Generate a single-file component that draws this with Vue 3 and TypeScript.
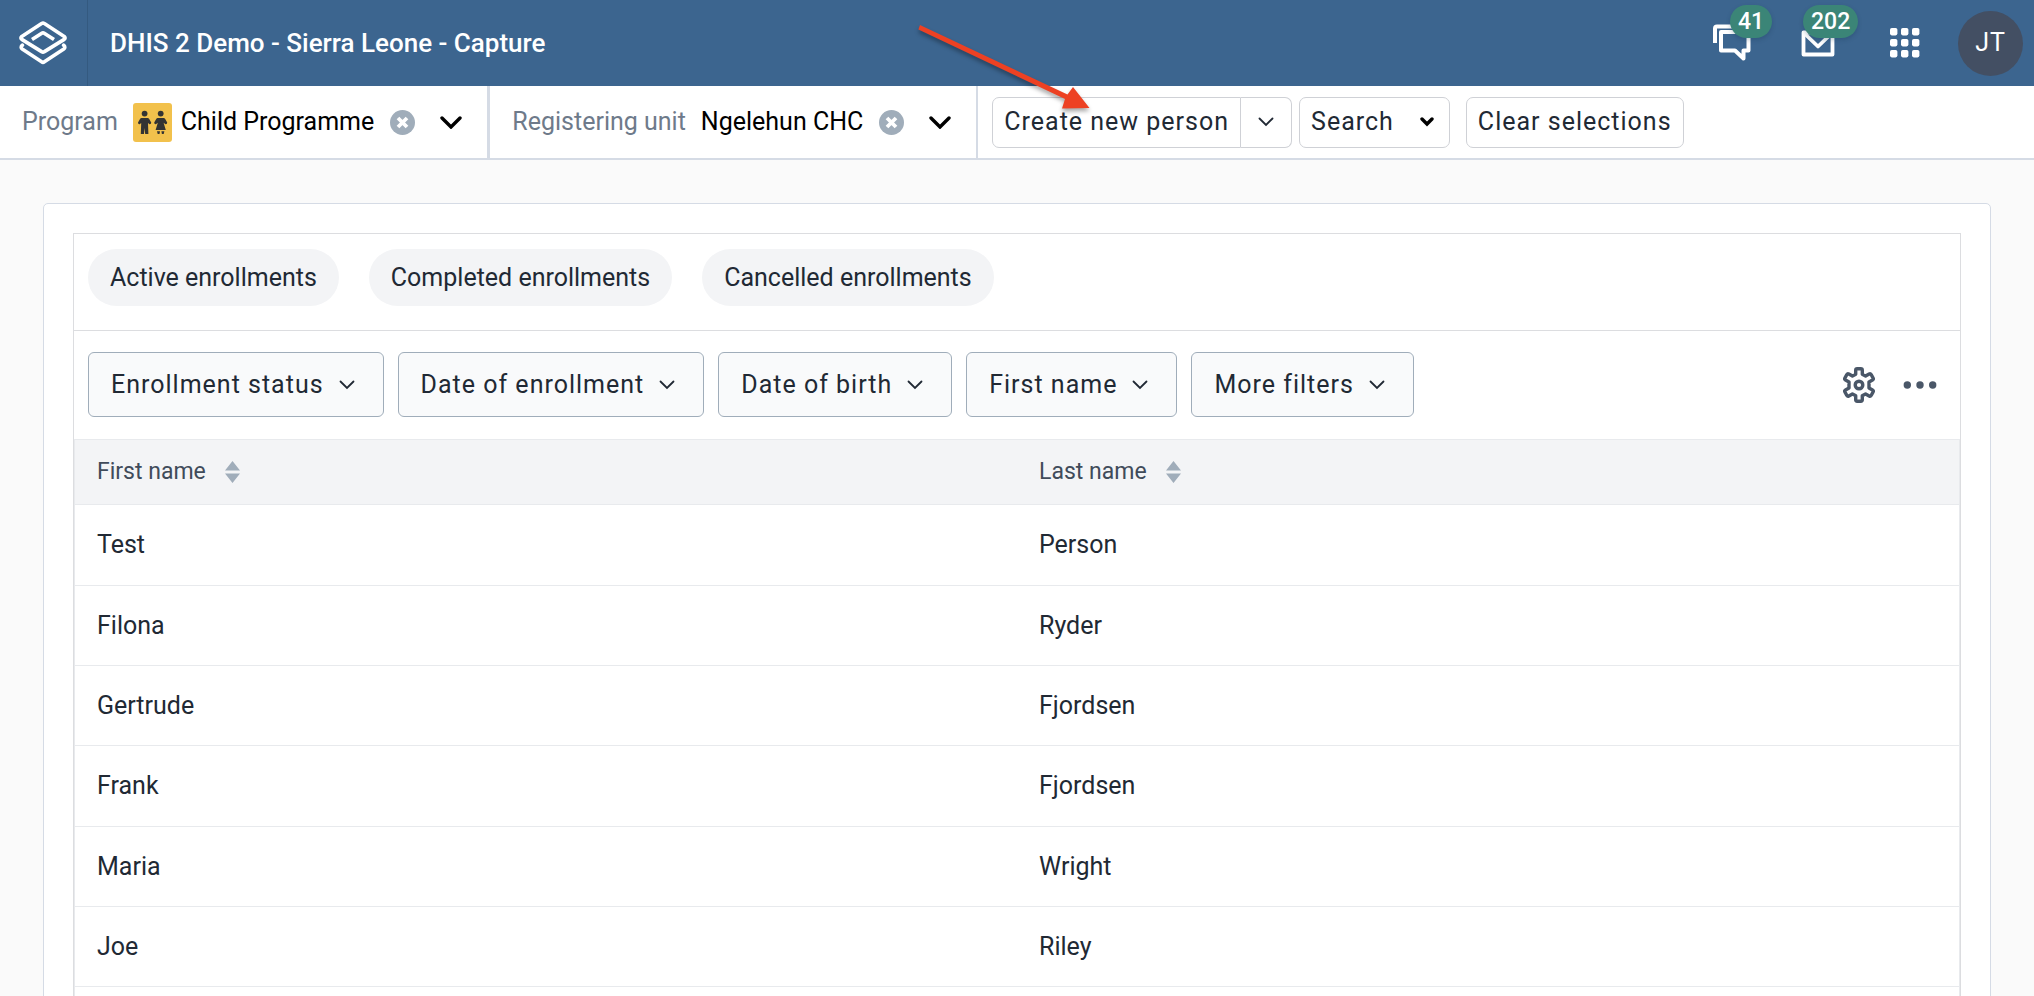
<script setup lang="ts">
interface Person {
  first: string
  last: string
}

const views: string[] = ['Active enrollments', 'Completed enrollments', 'Cancelled enrollments']
const filters: string[] = ['Enrollment status', 'Date of enrollment', 'Date of birth', 'First name', 'More filters']
const columns: string[] = ['First name', 'Last name']
const people: Person[] = [
  { first: 'Test', last: 'Person' },
  { first: 'Filona', last: 'Ryder' },
  { first: 'Gertrude', last: 'Fjordsen' },
  { first: 'Frank', last: 'Fjordsen' },
  { first: 'Maria', last: 'Wright' },
  { first: 'Joe', last: 'Riley' },
]
const dots: number[] = [0, 11, 22]
</script>

<template>
  <div class="page">
    <header class="topbar">
      <a class="logo" href="#" aria-label="Home">
        <svg width="48" height="44" viewBox="0 0 48 44" fill="none" stroke="#fff" stroke-width="3.6" stroke-linejoin="round" stroke-linecap="round">
          <path d="M22.6 2.6Q24 1.6 25.4 2.6L45.2 15.4Q47 17 45.2 18.4L25.4 30.6Q24 31.6 22.6 30.6L2.8 18.4Q1 17 2.8 15.4Z" />
          <path d="M13 18.6L22.8 12.2Q24 11.4 25.2 12.2L35 18.6" stroke-linecap="butt" />
          <path d="M3.4 24.2Q1 26.4 3.2 28L22.6 40.8Q24 41.8 25.4 40.8L44.8 28Q47 26.4 44.6 24.2" />
        </svg>
      </a>
      <h1 class="title">DHIS 2 Demo - Sierra Leone - Capture</h1>
      <nav class="tools">
        <a class="tool" href="#" aria-label="Interpretations">
          <svg width="38" height="38" viewBox="0 0 38 38" fill="none" stroke="#fff" stroke-width="4" stroke-linejoin="round">
            <path d="M2 19V4.500Q2 2.500 4 2.500H29" />
            <path d="M8 8H35.500V26.500H30.500V34.500L22 26.500H8Z" />
          </svg>
          <span class="badge">41</span>
        </a>
        <a class="tool" href="#" aria-label="Messages">
          <svg width="34" height="38" viewBox="0 0 34 38" fill="none" stroke="#fff" stroke-width="3.8" stroke-linejoin="round">
            <path d="M2.500 8.500H31.500V30.500H2.500Z" />
            <path d="M2.500 8.500L17 22.500L31.500 8.500" />
          </svg>
          <span class="badge">202</span>
        </a>
        <button class="tool" type="button" aria-label="Apps">
          <svg width="30" height="30" viewBox="0 0 30 30" fill="#fff">
            <template v-for="y in dots" :key="y">
              <rect v-for="x in dots" :key="x" :x="x" :y="y" width="7.4" height="7.4" rx="1.8" />
            </template>
          </svg>
        </button>
        <button class="avatar" type="button">JT</button>
      </nav>
    </header>

    <div class="selectors">
      <div class="selector program">
        <span class="label">Program</span>
        <svg class="program-icon" width="39" height="39" viewBox="0 0 39 39">
          <rect width="39" height="39" rx="3" fill="#f2c14c" />
          <g fill="#333">
            <circle cx="11.600" cy="10.600" r="2.900" />
            <path d="M8.500 15H14.700Q15.600 15 16.200 16L18.200 19.500Q18.300 21.500 16.500 21.300L15 20L15.400 31H12.200L11.600 25L11 31H7.800L8.200 20L6.700 21.300Q4.900 21.500 5 19.500L7 16Q7.600 15 8.500 15Z" />
            <circle cx="27.700" cy="10.600" r="2.900" />
            <path d="M24.700 15H30.700Q31.600 15 32.200 16L34.200 19.500Q34.300 21.500 32.500 21.300L30.600 19.800L32.800 27H22.600L24.800 19.800L22.900 21.300Q21.100 21.500 21.200 19.500L23.200 16Q23.800 15 24.700 15Z" />
            <path d="M24 28.300H27L26.500 31H24.700ZM28.400 28.300H31.400L30.700 31H28.900Z" />
          </g>
        </svg>
        <span class="value">Child Programme</span>
        <button class="clear" type="button" aria-label="Clear program">
          <svg width="25" height="25" viewBox="0 0 25 25">
            <circle cx="12.500" cy="12.500" r="12.500" fill="#a0adba" />
            <path d="M8 8L17 17M17 8L8 17" stroke="#fff" stroke-width="3.8" />
          </svg>
        </button>
        <button class="open" type="button" aria-label="Change program">
          <svg width="22" height="13" viewBox="0 0 22 13" fill="none" stroke="#000" stroke-width="3.4" stroke-linecap="round"><path d="M2 2L11 11L20 2" /></svg>
        </button>
      </div>
      <div class="selector unit">
        <span class="label">Registering unit</span>
        <span class="value">Ngelehun CHC</span>
        <button class="clear" type="button" aria-label="Clear registering unit">
          <svg width="25" height="25" viewBox="0 0 25 25">
            <circle cx="12.500" cy="12.500" r="12.500" fill="#a0adba" />
            <path d="M8 8L17 17M17 8L8 17" stroke="#fff" stroke-width="3.8" />
          </svg>
        </button>
        <button class="open" type="button" aria-label="Change registering unit">
          <svg width="22" height="13" viewBox="0 0 22 13" fill="none" stroke="#000" stroke-width="3.400" stroke-linecap="round"><path d="M2 2L11 11L20 2" /></svg>
        </button>
      </div>
      <div class="actions">
        <div class="split">
          <button class="action main" type="button">Create new person</button>
          <button class="action more" type="button" aria-label="More create options">
            <svg width="16" height="10" viewBox="0 0 16 10" fill="none" stroke="#212934" stroke-width="1.800" stroke-linecap="round"><path d="M1.500 1.500L8 8L14.500 1.500" /></svg>
          </button>
          <svg class="pointer" width="190" height="100" viewBox="0 0 190 100" aria-hidden="true">
            <path d="M7 5L5.400 9.500L152 79L149 88.500L176.500 88L160 67L154.500 74.500Z" fill="#ed4123" />
          </svg>
        </div>
        <button class="action search" type="button">
          Search
          <svg width="14" height="10" viewBox="0 0 14 10" fill="none" stroke="#000" stroke-width="3.400" stroke-linecap="round"><path d="M2 2L7 7L12 2" /></svg>
        </button>
        <button class="action reset" type="button">Clear selections</button>
      </div>
    </div>

    <main class="card">
      <section class="list">
        <div class="views">
          <button v-for="view in views" :key="view" class="chip" type="button">{{ view }}</button>
        </div>
        <div class="filters">
          <button v-for="filter in filters" :key="filter" class="filter" type="button">
            {{ filter }}
            <svg width="16" height="10" viewBox="0 0 16 10" fill="none" stroke="#212934" stroke-width="1.800" stroke-linecap="round"><path d="M1.500 1.500L8 8L14.500 1.500" /></svg>
          </button>
          <div class="list-tools">
            <button type="button" aria-label="Select columns">
              <svg width="36" height="36" viewBox="0 0 36 36" fill="none" stroke="#4a5768" stroke-width="3.400" stroke-linejoin="round">
                <path d="M14.700 3.200Q14.700 1.800 16.200 1.800H19.800Q21.300 1.800 21.300 3.200V7.200L24.600 9.100L28.100 7.100Q29.400 6.400 30.200 7.700L32 10.800Q32.800 12.200 31.500 13L28 15V21L31.500 23Q32.800 23.800 32 25.200L30.200 28.300Q29.400 29.600 28.100 28.900L24.600 26.900L21.300 28.800V32.800Q21.300 34.200 19.800 34.200H16.200Q14.700 34.200 14.700 32.800V28.800L11.400 26.900L7.900 28.900Q6.600 29.600 5.800 28.300L4 25.200Q3.200 23.800 4.500 23L8 21V15L4.500 13Q3.200 12.200 4 10.800L5.800 7.700Q6.600 6.400 7.900 7.100L11.400 9.100L14.700 7.200Z" />
                <circle cx="18" cy="18" r="3.800" />
              </svg>
            </button>
            <button type="button" aria-label="More options">
              <svg width="34" height="8" viewBox="0 0 34 8" fill="#4a5768"><circle cx="4.300" cy="4" r="3.700" /><circle cx="17" cy="4" r="3.700" /><circle cx="29.700" cy="4" r="3.700" /></svg>
            </button>
          </div>
        </div>
        <div class="table-frame">
          <table class="people">
            <thead>
              <tr>
                <th v-for="column in columns" :key="column" scope="col">
                  <div class="heading">
                    {{ column }}
                    <button type="button" :aria-label="`Sort by ${column}`">
                      <svg width="15" height="22" viewBox="0 0 15 22" fill="#a0adba"><path d="M7.500 0L15 9.500H0ZM7.500 22L0 12.500H15Z" /></svg>
                    </button>
                  </div>
                </th>
              </tr>
            </thead>
            <tbody>
              <tr v-for="person in people" :key="person.first">
                <td>{{ person.first }}</td>
                <td>{{ person.last }}</td>
              </tr>
            </tbody>
          </table>
        </div>
      </section>
    </main>
  </div>
</template>

<style>
html,
body {
  margin: 0;
  background: #fafafa;
}
</style>

<style scoped>
.page {
  height: 100vh;
  overflow: hidden;
  font-family: Roboto, "Liberation Sans", sans-serif;
  font-size: 25px;
  line-height: 32px;
  color: #212934;
}
.page * {
  box-sizing: border-box;
}
button {
  margin: 0;
  padding: 0;
  border: 0;
  background: none;
  color: inherit;
  font: inherit;
}
svg {
  display: block;
  flex: none;
}
.topbar {
  display: flex;
  align-items: center;
  height: 86px;
  background: #3c658f;
  color: #fff;
}
.logo {
  display: flex;
  align-items: center;
  align-self: stretch;
  padding: 0 20px 0 19px;
  border-right: 1px solid #345a80;
}
.title {
  margin: 0 0 0 22px;
  font-size: 26px;
  font-weight: 500;
}
.tools {
  display: flex;
  align-items: center;
  margin-left: auto;
  padding-right: 11px;
}
.tool {
  position: relative;
  display: flex;
}
.tool:nth-child(1) {
  margin-right: 50px;
}
.tool:nth-child(2) {
  margin-right: 55px;
}
.tool:nth-child(3) {
  margin-right: 38px;
}
.badge {
  position: absolute;
  left: 17px;
  top: -19px;
  padding: 0 8px;
  border-radius: 17px;
  background: #3b8577;
  box-shadow: 0 2px 4px rgba(20, 50, 80, 0.25);
  color: #fff;
  font-size: 23px;
  font-weight: 500;
  line-height: 33px;
}
.tool:nth-child(2) .badge {
  left: 2px;
}
.avatar {
  width: 65px;
  height: 65px;
  border-radius: 50%;
  background: #434f63;
  letter-spacing: 1px;
}
.selectors {
  display: flex;
  height: 74px;
  border-bottom: 2px solid #d5dbe5;
  background: #fff;
}
.selector {
  display: flex;
  align-items: center;
  padding-left: 22px;
  color: #000;
}
.program {
  padding-right: 25px;
  border-right: 3px solid #d5dbe5;
}
.unit {
  padding-right: 25px;
  border-right: 2px solid #d5dbe5;
}
.label {
  margin-right: 15px;
  color: #6e7a8a;
}
.program-icon {
  margin-right: 9px;
}
.clear {
  margin: 0 25px 0 16px;
}
.actions {
  display: flex;
  align-items: center;
  padding-left: 14px;
}
.split {
  position: relative;
  display: flex;
  margin-right: 7px;
}
.pointer {
  position: absolute;
  left: -79px;
  top: -77px;
  filter: drop-shadow(0 3px 2px rgba(0, 0, 0, 0.35));
  pointer-events: none;
}
.action {
  display: flex;
  align-items: center;
  height: 51px;
  padding: 0 11px;
  border: 1px solid #cfd1d6;
  border-radius: 7px;
  letter-spacing: 1px;
}
.main {
  border-radius: 7px 0 0 7px;
}
.more {
  padding: 0 17px;
  border-left: 0;
  border-radius: 0 7px 7px 0;
}
.search {
  gap: 26px;
  padding-right: 15px;
  margin-right: 16px;
}
.card {
  margin: 43px;
  padding: 29px;
  border: 1px solid #d5dbe5;
  border-radius: 5px;
  background: #fff;
}
.list {
  border: 1px solid #dcdde0;
}
.views {
  display: flex;
  gap: 30px;
  padding: 15px 14px 24px;
}
.chip {
  height: 57px;
  padding: 0 22px;
  border-radius: 29px;
  background: #f3f4f6;
}
.filters {
  display: flex;
  align-items: center;
  gap: 14px;
  padding: 21px 23px 22px 14px;
  border-top: 1px solid #dcdde0;
}
.filter {
  display: flex;
  align-items: center;
  gap: 15px;
  height: 65px;
  padding: 0 28px 0 22px;
  border: 1px solid #a0adba;
  border-radius: 6px;
  background: #f9fafb;
  letter-spacing: 1px;
}
.list-tools {
  display: flex;
  align-items: center;
  gap: 26px;
  margin-left: auto;
}
.table-frame {
  padding-bottom: 80px;
  border: 1px solid #e8eaed;
}
.people {
  width: 100%;
  table-layout: fixed;
  border-spacing: 0;
}
.people th,
.people td {
  padding: 0 22px;
  border-bottom: 1px solid #e8eaed;
  text-align: left;
  font-weight: 400;
}
.people th {
  height: 65px;
  background: #f3f4f6;
  color: #404b5a;
  font-size: 23px;
}
.people td {
  height: 80px;
}
.people tr:nth-child(3n + 1) td {
  height: 81px;
}
.heading {
  display: flex;
  align-items: center;
  gap: 19px;
}
</style>
